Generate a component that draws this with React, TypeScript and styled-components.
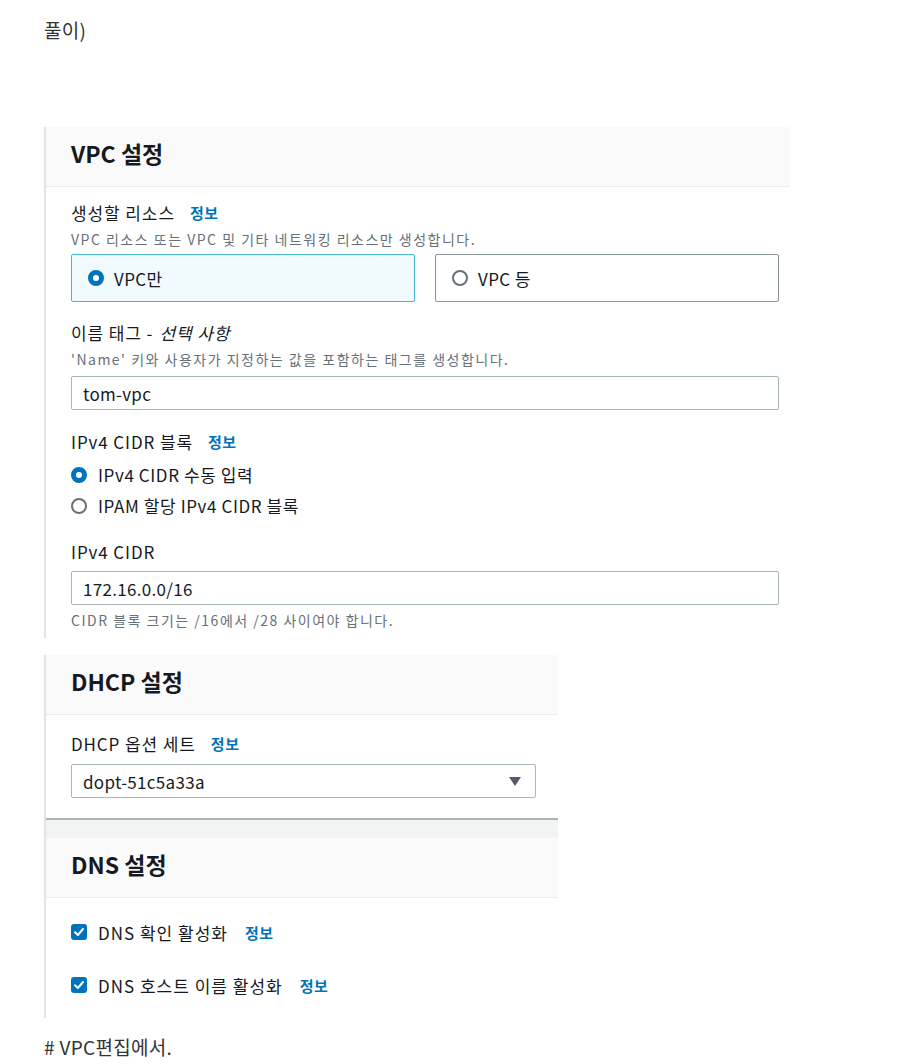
import React from 'react'
import styled, { createGlobalStyle } from 'styled-components'

const GlobalStyle = createGlobalStyle`
  body {
    margin: 0;
    background: #ffffff;
    font-family: 'Noto Sans CJK KR', 'Noto Sans', sans-serif;
  }
`

const Page = styled.div`
  padding: 18px 0 0 44px;
`

const BlogText = styled.p<{ mt?: number }>`
  margin: ${(p) => p.mt || 0}px 0 0;
  font-size: 19px;
  line-height: 24px;
  letter-spacing: 0.3px;
  color: #333333;
`

const Shot = styled.div<{ w: number; mt: number }>`
  width: ${(p) => p.w}px;
  margin-top: ${(p) => p.mt}px;
  border-left: 2px solid #e4e4e4;
  box-sizing: border-box;
  background: #ffffff;
`

const PanelHeader = styled.div`
  height: 52px;
  padding: 0 0 7px 25px;
  background: #fafafa;
  border-bottom: 1px solid #eaeded;
  display: flex;
  align-items: center;
`

const Title = styled.h2`
  margin: 0;
  font-size: 23px;
  font-weight: 700;
  color: #16191f;
`

const PanelBody = styled.div<{ pt: number; pb: number; bottomRule?: boolean }>`
  padding: ${(p) => p.pt}px 12px ${(p) => p.pb}px 25px;
  border-bottom: ${(p) => (p.bottomRule ? '2px solid #aab7b8' : 'none')};
`

const Gutter = styled.div`
  height: 18px;
  background: #f2f3f3;
`

const Field = styled.div<{ mt?: number }>`
  margin-top: ${(p) => p.mt || 0}px;
`

const Label = styled.div`
  font-size: 17px;
  line-height: 24px;
  letter-spacing: 0.9px;
  color: #16191f;
  display: flex;
  align-items: center;
`

const Optional = styled.i`
  margin-left: 6px;
`

const Info = styled.span`
  margin-left: 15px;
  font-size: 15px;
  font-weight: 700;
  letter-spacing: 0.5px;
  color: #0073bb;
`

const Desc = styled.div<{ mt?: number }>`
  margin-top: ${(p) => p.mt ?? 4}px;
  font-size: 14px;
  line-height: 20px;
  letter-spacing: 1.5px;
  color: #687078;
`

const TileRow = styled.div`
  margin-top: 5px;
  display: grid;
  grid-template-columns: 344px 344px;
  column-gap: 20px;
`

const Tile = styled.div<{ active?: boolean }>`
  height: 48px;
  box-sizing: border-box;
  border: 1px solid ${(p) => (p.active ? '#44b9d6' : '#879596')};
  background: ${(p) => (p.active ? '#f1faff' : '#ffffff')};
  border-radius: 2px;
  display: flex;
  align-items: center;
  padding-left: 16px;
  gap: 10px;
  font-size: 17px;
  letter-spacing: 0.4px;
  color: #16191f;
`

const Radio = styled.span<{ checked?: boolean }>`
  width: 16px;
  height: 16px;
  box-sizing: border-box;
  border-radius: 50%;
  flex: none;
  background: #ffffff;
  border: ${(p) => (p.checked ? '5px solid #0073bb' : '2px solid #687078')};
`

const RadioRow = styled.div`
  height: 31px;
  display: flex;
  align-items: center;
  gap: 11px;
  font-size: 17px;
  letter-spacing: 0.6px;
  color: #16191f;
`

const RadioGroup = styled.div`
  margin-top: 5px;
`

const Input = styled.div<{ w: number; mt?: number }>`
  margin-top: ${(p) => p.mt ?? 7}px;
  width: ${(p) => p.w}px;
  height: 34px;
  box-sizing: border-box;
  border: 1px solid #aab7b8;
  border-radius: 2px;
  display: flex;
  align-items: center;
  justify-content: space-between;
  padding: 0 14px 0 11px;
  font-size: 17px;
  letter-spacing: 0.3px;
  color: #16191f;
`

const Caret = styled.span`
  width: 0;
  height: 0;
  border-left: 6px solid transparent;
  border-right: 6px solid transparent;
  border-top: 9px solid #545b64;
`

const CheckRow = styled.div<{ mt?: number }>`
  margin-top: ${(p) => p.mt || 0}px;
  height: 24px;
  display: flex;
  align-items: center;
  gap: 11px;
  font-size: 17px;
  letter-spacing: 1px;
  color: #16191f;
`

const Box = styled.span`
  width: 16px;
  height: 16px;
  border-radius: 3px;
  background: #0073bb;
  display: flex;
  align-items: center;
  justify-content: center;
  flex: none;
`

const CheckInfo = styled(Info)`
  margin-left: 6px;
`

const Check = () => (
  <Box>
    <svg width="12" height="12" viewBox="0 0 12 12">
      <path d="M2 6.2 L4.9 9 L10 3" fill="none" stroke="#fff" strokeWidth="2" strokeLinecap="round" strokeLinejoin="round" />
    </svg>
  </Box>
)

const App = () => {
  return (
    <Page>
      <GlobalStyle />
      <BlogText>풀이)</BlogText>

      <Shot w={746} mt={85}>
        <PanelHeader>
          <Title>VPC 설정</Title>
        </PanelHeader>
        <PanelBody pt={14} pb={8}>
          <Field>
            <Label>
              생성할 리소스<Info>정보</Info>
            </Label>
            <Desc>VPC 리소스 또는 VPC 및 기타 네트워킹 리소스만 생성합니다.</Desc>
            <TileRow>
              <Tile active>
                <Radio checked />
                VPC만
              </Tile>
              <Tile>
                <Radio />
                VPC 등
              </Tile>
            </TileRow>
          </Field>
          <Field mt={19}>
            <Label>
              이름 태그 -<Optional>선택 사항</Optional>
            </Label>
            <Desc>'Name' 키와 사용자가 지정하는 값을 포함하는 태그를 생성합니다.</Desc>
            <Input w={708}>tom-vpc</Input>
          </Field>
          <Field mt={20}>
            <Label>
              IPv4 CIDR 블록<Info>정보</Info>
            </Label>
            <RadioGroup>
              <RadioRow>
                <Radio checked />
                IPv4 CIDR 수동 입력
              </RadioRow>
              <RadioRow>
                <Radio />
                IPAM 할당 IPv4 CIDR 블록
              </RadioRow>
            </RadioGroup>
          </Field>
          <Field mt={19}>
            <Label>IPv4 CIDR</Label>
            <Input w={708}>172.16.0.0/16</Input>
            <Desc mt={5}>CIDR 블록 크기는 /16에서 /28 사이여야 합니다.</Desc>
          </Field>
        </PanelBody>
      </Shot>

      <Shot w={514} mt={17}>
        <PanelHeader>
          <Title>DHCP 설정</Title>
        </PanelHeader>
        <PanelBody pt={17} pb={20} bottomRule>
          <Label>
            DHCP 옵션 세트<Info>정보</Info>
          </Label>
          <Input w={465} mt={8}>
            dopt-51c5a33a
            <Caret />
          </Input>
        </PanelBody>
        <Gutter />
        <PanelHeader>
          <Title>DNS 설정</Title>
        </PanelHeader>
        <PanelBody pt={22} pb={21}>
          <CheckRow>
            <Check />
            DNS 확인 활성화<CheckInfo>정보</CheckInfo>
          </CheckRow>
          <CheckRow mt={29}>
            <Check />
            DNS 호스트 이름 활성화<CheckInfo>정보</CheckInfo>
          </CheckRow>
        </PanelBody>
      </Shot>

      <BlogText mt={17}># VPC편집에서.</BlogText>
    </Page>
  )
}

export default App
